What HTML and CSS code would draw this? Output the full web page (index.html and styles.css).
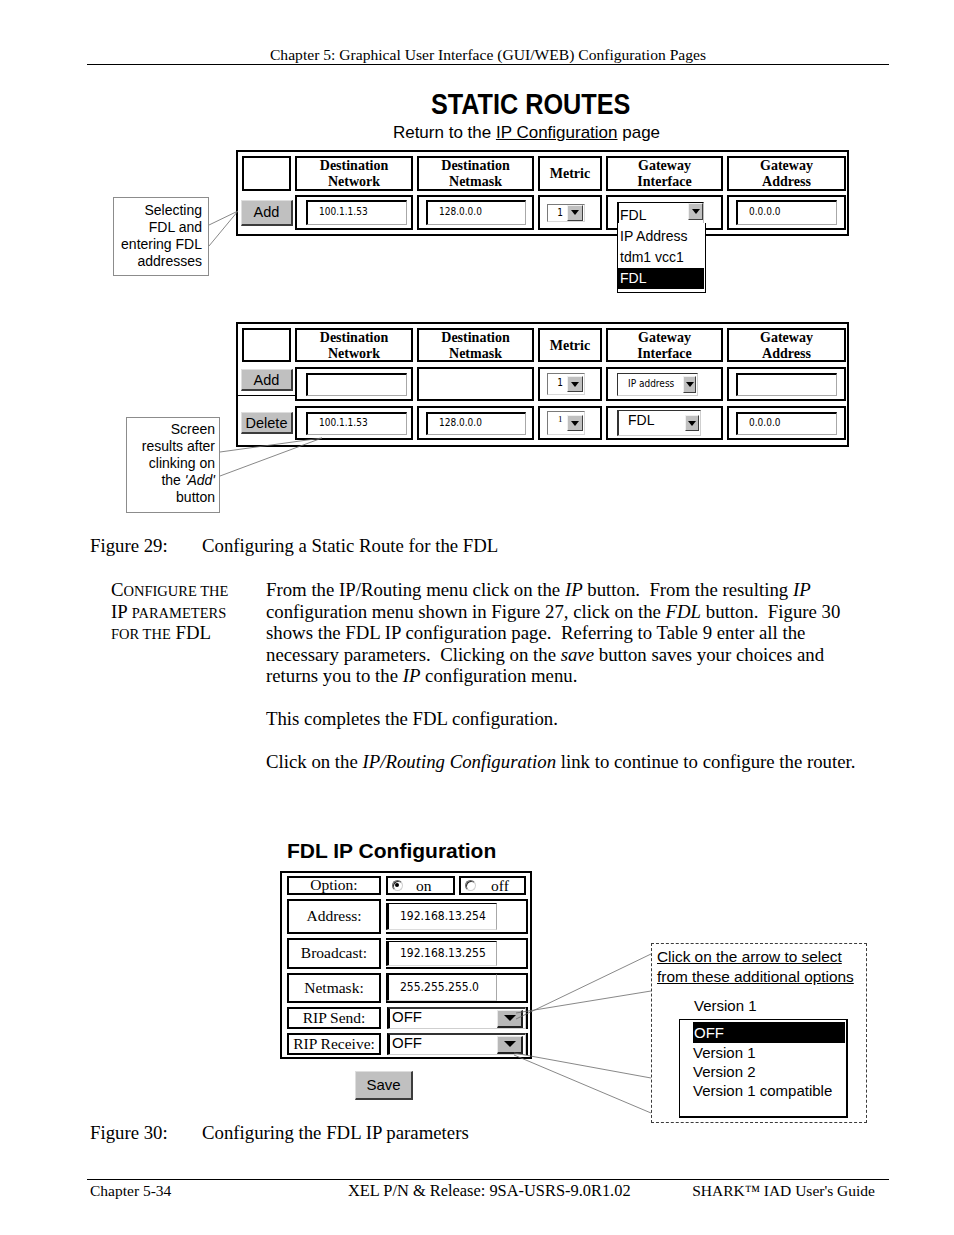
FILE: index.html
```html
<!DOCTYPE html>
<html lang="en">
<head>
<meta charset="utf-8">
<title>Static Routes / FDL IP Configuration</title>
<link rel="stylesheet" href="styles.css">
</head>
<body>
<div class="page">
  <header class="runhead">Chapter 5: Graphical User Interface (GUI/WEB) Configuration Pages</header>

  <section class="fig29">
    <h1 class="sr-title"><span>STATIC ROUTES</span></h1>
    <p class="sr-return">Return to the <span class="link">IP Configuration</span> page</p>

    <div class="rt rt1">
      <div class="c"></div>
      <div class="c h">Destination<br>Network</div>
      <div class="c h">Destination<br>Netmask</div>
      <div class="c h">Metric</div>
      <div class="c h">Gateway<br>Interface</div>
      <div class="c h">Gateway<br>Address</div>

      <div class="bc bc1"><span class="btn btn-add1">Add</span></div>
      <div class="c net"><span class="inp">100.1.1.53</span></div>
      <div class="c mask"><span class="inp">128.0.0.0</span></div>
      <div class="c met"><span class="sel sel-met"><span class="v">1</span><span class="arr"></span></span></div>
      <div class="c gi">
        <span class="sel sel-gi1"><span class="v">FDL</span><span class="arr"></span>
          <span class="ddlist">
            <span class="ddi">IP Address</span>
            <span class="ddi">tdm1 vcc1</span>
            <span class="ddi on">FDL</span>
          </span>
        </span>
      </div>
      <div class="c ga"><span class="inp">0.0.0.0</span></div>
    </div>

    <div class="rt rt2">
      <div class="c"></div>
      <div class="c h">Destination<br>Network</div>
      <div class="c h">Destination<br>Netmask</div>
      <div class="c h">Metric</div>
      <div class="c h">Gateway<br>Interface</div>
      <div class="c h">Gateway<br>Address</div>

      <div class="bc bc2"><span class="btn btn-sm">Add</span><span class="hline"></span></div>
      <div class="c net"><span class="inp inp-sm"></span></div>
      <div class="c mask"></div>
      <div class="c met"><span class="sel sel-met2"><span class="v">1</span><span class="arr"></span></span></div>
      <div class="c gi"><span class="sel sel-gi2"><span class="v">IP address</span><span class="arr"></span></span></div>
      <div class="c ga"><span class="inp inp-sm"></span></div>

      <div class="bc bc3"><span class="btn btn-sm">Delete</span></div>
      <div class="c net"><span class="inp inp-sm">100.1.1.53</span></div>
      <div class="c mask"><span class="inp inp-sm">128.0.0.0</span></div>
      <div class="c met"><span class="sel sel-met3"><span class="v">1</span><span class="arr"></span></span></div>
      <div class="c gi"><span class="sel sel-gi3"><span class="v">FDL</span><span class="arr"></span></span></div>
      <div class="c ga"><span class="inp inp-sm">0.0.0.0</span></div>
    </div>
  </section>

  <p class="caption caption29"><span class="fignum">Figure 29:</span><span>Configuring a Static Route for the FDL</span></p>

  <div class="topic">
    <div class="side">C<span class="sc">ONFIGURE THE</span><br>IP <span class="sc">PARAMETERS</span><br><span class="sc">FOR THE</span> FDL</div>
    <div class="body">
      <p>From the IP/Routing menu click on the <i>IP</i> button.&nbsp; From the resulting <i>IP</i><br>configuration menu shown in Figure 27<i>,</i> click on the <i>FDL</i> button.&nbsp; Figure 30<br>shows the FDL IP configuration page.&nbsp; Referring to Table 9 enter all the<br>necessary parameters.&nbsp; Clicking on the <i>save</i> button saves your choices and<br>returns you to the <i>IP</i> configuration menu.</p>
      <p>This completes the FDL configuration.</p>
      <p>Click on the <i>IP/Routing Configuration</i> link to continue to configure the router.</p>
    </div>
  </div>

  <section class="fig30">
    <h2 class="fdl-title">FDL IP Configuration</h2>
    <div class="fdl">
      <div class="lc">Option:</div>
      <div class="opts">
        <div class="opt"><span class="radio checked"></span><span class="ot">on</span></div>
        <div class="opt opt-off"><span class="radio"></span><span class="ot">off</span></div>
      </div>
      <div class="lc">Address:</div>
      <div class="vc"><span class="finp">192.168.13.254</span></div>
      <div class="lc">Broadcast:</div>
      <div class="vc"><span class="finp finp-b">192.168.13.255</span></div>
      <div class="lc">Netmask:</div>
      <div class="vc"><span class="finp">255.255.255.0</span></div>
      <div class="lc">RIP Send:</div>
      <div class="rc"><span class="rsel"><span class="v">OFF</span><span class="rarr"></span></span></div>
      <div class="lc">RIP Receive:</div>
      <div class="rc"><span class="rsel"><span class="v">OFF</span><span class="rarr"></span></span></div>
    </div>
    <div class="save-row"><span class="btn btn-save">Save</span></div>
  </section>

  <p class="caption caption30"><span class="fignum">Figure 30:</span><span>Configuring the FDL IP parameters</span></p>

  <footer class="runfoot">
    <span class="f1">Chapter 5-34</span>
    <span class="f2">XEL P/N &amp; Release: 9SA-USRS-9.0R1.02</span>
    <span class="f3">SHARK™ IAD User's Guide</span>
  </footer>

  <!-- annotations over the figures -->
  <div class="callout co1">Selecting<br>FDL and<br>entering FDL<br>addresses</div>
  <div class="callout co2">Screen<br>results after<br>clinking on<br>the <i>'Add'</i><br>button</div>
  <div class="callout co3">
    <div class="co3-head">Click on the arrow to select<br>from these additional options</div>
    <div class="co3-cur">Version 1</div>
    <div class="co3-list">
      <div class="co3-i on">OFF</div>
      <div class="co3-i">Version 1</div>
      <div class="co3-i">Version 2</div>
      <div class="co3-i">Version 1 compatible</div>
    </div>
  </div>

  <svg class="leaders" width="954" height="1235" viewBox="0 0 954 1235">
    <g stroke="#6a6a6a" stroke-width="0.8" fill="none">
      <line x1="209" y1="225" x2="238" y2="211"/>
      <line x1="209" y1="246" x2="238" y2="211"/>
      <line x1="220" y1="452" x2="322" y2="438"/>
      <line x1="220" y1="476" x2="322" y2="438"/>
      <line x1="516" y1="1019" x2="651" y2="954"/>
      <line x1="516" y1="1013" x2="651" y2="991"/>
      <line x1="514" y1="1053" x2="651" y2="1078"/>
      <line x1="514" y1="1055" x2="651" y2="1113"/>
    </g>
  </svg>
</div>
</body>
</html>
```

FILE: styles.css
```css
html, body {
  margin: 0;
  padding: 0;
  background: #fff;
}

.page {
  position: relative;
  width: 954px;
  height: 1235px;
  overflow: hidden;
  font-family: "Liberation Serif", "Times New Roman", serif;
  color: #000;
}

/* running head / foot */
.runhead {
  margin-left: 87px;
  width: 802px;
  padding-top: 45px;
  font-size: 15.6px;
  line-height: 19px;
  text-align: center;
  border-bottom: 1px solid #000;
}

.runfoot {
  margin-left: 87px;
  width: 802px;
  margin-top: 36px;
  border-top: 1px solid #000;
  box-sizing: border-box;
  padding: 2px 14px 0 3px;
  display: flex;
  font-size: 15.5px;
  line-height: 18px;
}
.runfoot .f1 { width: 258px; }
.runfoot .f2 { font-size: 16.4px; }
.runfoot .f3 { margin-left: auto; }

/* figure 29 */
.sr-title {
  margin: 24px 0 0;
  font-family: "Liberation Sans", Arial, sans-serif;
  font-weight: bold;
  font-size: 29px;
  line-height: 30px;
  text-align: center;
  padding-left: 108px;
}
.sr-title span {
  display: inline-block;
  transform: scaleX(0.87);
}
.sr-return {
  margin: 5px 0 0;
  padding-left: 99px;
  text-align: center;
  font-family: "Liberation Sans", Arial, sans-serif;
  font-size: 17px;
  line-height: 18px;
}
.link { text-decoration: underline; }

.rt {
  margin-left: 236px;
  width: 613px;
  box-sizing: border-box;
  border: 2px solid #000;
  display: grid;
  grid-template-columns: 49px 118px 117px 64px 117px 119px;
  column-gap: 4px;
}
.rt1 {
  margin-top: 8px;
  padding: 4px 1px 4px 4px;
  grid-auto-rows: 35px;
  row-gap: 4px;
}
.rt2 {
  margin-top: 86px;
  padding: 4px 1px 5px 4px;
  grid-auto-rows: 34px;
  row-gap: 5px;
}

.c {
  box-sizing: border-box;
  border: 2px solid #000;
  display: flex;
  align-items: center;
  min-width: 0;
}
.h {
  justify-content: center;
  text-align: center;
  font-weight: bold;
  font-size: 14px;
  line-height: 16px;
  padding-top: 1px;
}

.net { padding-left: 9px; }
.net .inp { width: 101px; }
.mask { padding-left: 7px; }
.mask .inp { width: 100px; }
.ga { padding-left: 7px; }
.ga .inp { width: 101px; }
.met { padding-left: 7px; }
.gi { padding-left: 9px; }

.inp {
  display: block;
  box-sizing: border-box;
  height: 25px;
  background: #fff;
  border-top: 2px solid #000;
  border-left: 2px solid #000;
  border-right: 1px solid #a8a8a8;
  border-bottom: 1px solid #a8a8a8;
  padding: 2px 0 0 11px;
  font-family: "DejaVu Sans Condensed", "DejaVu Sans", sans-serif;
  font-stretch: condensed;
  font-size: 10px;
  line-height: 16px;
  white-space: nowrap;
}
.inp-sm { height: 23px; padding-top: 1px; }

/* buttons */
.bc {
  display: flex;
  flex-direction: column;
  align-items: flex-start;
  min-width: 0;
}
.bc1 { justify-content: center; }
.bc2 { padding-top: 2px; }
.bc3 { justify-content: center; }
.btn {
  display: flex;
  align-items: center;
  justify-content: center;
  box-sizing: border-box;
  background: #c0c0c0;
  border-top: 1px solid #dedede;
  border-left: 1px solid #dedede;
  border-right: 2px solid #3c3c3c;
  border-bottom: 2px solid #3c3c3c;
  font-family: "Liberation Sans", Arial, sans-serif;
  font-size: 14.5px;
  color: #000;
}
.btn-add1 { width: 52px; height: 26px; margin-left: -1px; }
.btn-sm { width: 52px; height: 22px; margin-left: -1px; }
.hline {
  display: block;
  margin-top: 4px;
  margin-left: -4px;
  width: 57px;
  height: 1px;
  background: #000;
}

/* select widgets */
.sel {
  display: flex;
  box-sizing: border-box;
  background: #fff;
  position: relative;
}
.sel .v {
  flex: 1;
  min-width: 0;
  white-space: nowrap;
}
.arr {
  box-sizing: border-box;
  background: #c0c0c0;
  border-top: 1px solid #f0f0f0;
  border-left: 1px solid #f0f0f0;
  border-right: 1px solid #404040;
  border-bottom: 1px solid #404040;
  display: flex;
  align-items: center;
  justify-content: center;
}
.arr::before {
  content: "";
  width: 0;
  height: 0;
  border-left: 4px solid transparent;
  border-right: 4px solid transparent;
  border-top: 5px solid #000;
}

.sel-met, .sel-met2, .sel-met3 {
  width: 38px;
  border: 1px solid;
  border-color: #7a7a7a #d8d8d8 #d8d8d8 #7a7a7a;
  font-family: "DejaVu Sans Condensed", "DejaVu Sans", sans-serif;
  font-stretch: condensed;
  font-size: 10px;
}
.sel-met { height: 18px; line-height: 15px; }
.sel-met2 { height: 22px; line-height: 18px; }
.sel-met3 { height: 24px; line-height: 14px; }
.sel-met .v, .sel-met2 .v { text-align: right; padding-right: 4px; }
.sel-met3 .v {
  padding-left: 10px;
  font-family: "Liberation Serif", serif;
  font-size: 9px;
}
.sel-met .arr { width: 16px; margin: 0 1px 0 0; }
.sel-met2 .arr { width: 16px; margin: 2px 1px 2px 0; }
.sel-met3 .arr { width: 16px; margin: 3px 1px 3px 0; }

.sel-gi1 {
  width: 87px;
  height: 21px;
  border-top: 1px solid #000;
  border-left: 2px solid #000;
  border-right: 1px solid #bdbdbd;
  font-family: "Liberation Sans", Arial, sans-serif;
  font-size: 14px;
}
.sel-gi1 .v {
  align-self: flex-end;
  line-height: 16px;
  padding-left: 1px;
}
.sel-gi1 .arr { width: 15px; height: 17px; margin-top: 0; }

.ddlist {
  position: absolute;
  left: -2px;
  top: 100%;
  width: 89px;
  box-sizing: border-box;
  background: #fff;
  border: 1px solid #000;
  border-top: 0;
  padding: 3px 1px 3px 0;
  z-index: 2;
  font-family: "Liberation Sans", Arial, sans-serif;
  font-size: 14px;
}
.ddi {
  display: block;
  height: 21px;
  line-height: 21px;
  padding-left: 2px;
}
.ddi.on { background: #000; color: #fff; }

.sel-gi2 {
  width: 81px;
  height: 23px;
  border-top: 1px solid #333;
  border-left: 1px solid #333;
  border-right: 1px solid #cfcfcf;
  border-bottom: 1px solid #cfcfcf;
  font-family: "DejaVu Sans Condensed", "DejaVu Sans", sans-serif;
  font-stretch: condensed;
  font-size: 10px;
  line-height: 20px;
}
.sel-gi2 .v { padding-left: 10px; }
.sel-gi2 .arr { width: 13px; margin: 2px 1px 2px 0; }

.sel-gi3 {
  width: 84px;
  height: 26px;
  border-top: 1px solid #333;
  border-left: 2px solid #333;
  border-right: 1px solid #cfcfcf;
  border-bottom: 1px solid #cfcfcf;
  font-family: "Liberation Sans", Arial, sans-serif;
  font-size: 14px;
  line-height: 18px;
}
.sel-gi3 .v { padding-left: 9px; }
.sel-gi3 .arr { width: 14px; margin: 4px 1px 4px 0; }

/* captions */
.caption {
  margin: 0;
  padding-left: 90px;
  display: flex;
  font-size: 18.8px;
  line-height: 20px;
  white-space: nowrap;
}
.caption .fignum { width: 112px; }
.caption29 { margin-top: 89px; }
.caption30 { margin-top: 23px; }

/* body topic */
.topic {
  margin-top: 23px;
  display: flex;
  font-size: 18.8px;
  line-height: 21.5px;
}
.side {
  width: 155px;
  padding-left: 111px;
  white-space: nowrap;
}
.sc {
  font-size: 14.5px;
  line-height: 12px;
}
.body p {
  margin: 0 0 21.5px;
  white-space: nowrap;
}
.body p:last-child { margin-bottom: 0; }

/* figure 30 */
.fdl-title {
  margin: 65px 0 0 287px;
  font-family: "Liberation Sans", Arial, sans-serif;
  font-weight: bold;
  font-size: 21px;
  line-height: 26px;
}
.fdl {
  margin: 7px 0 0 280px;
  width: 252px;
  box-sizing: border-box;
  border: 2px solid #000;
  padding: 3px 2px 2px 5px;
  display: grid;
  grid-template-columns: 94px 142px;
  grid-template-rows: 19px 35px 31px 30px 22px 22px;
  column-gap: 5px;
  row-gap: 4px;
  font-size: 15.5px;
}
.lc {
  box-sizing: border-box;
  border: 2px solid #000;
  display: flex;
  align-items: center;
  justify-content: center;
  line-height: 16px;
  white-space: nowrap;
}
.opts {
  display: flex;
  gap: 4px;
  width: 140px;
}
.opt {
  box-sizing: border-box;
  border: 2px solid #000;
  width: 69px;
  display: flex;
  align-items: center;
  padding-left: 4px;
}
.opt-off { width: 67px; }
.opt .ot { margin-left: 13px; line-height: 15px; }
.opt-off .ot { margin-left: 15px; }
.radio {
  box-sizing: border-box;
  width: 11px;
  height: 11px;
  border-radius: 50%;
  border: 1px solid;
  border-color: #6a6a6a #d0d0d0 #d0d0d0 #6a6a6a;
  background: #fff;
  box-shadow: inset 1px 1px 0 #303030;
  position: relative;
}
.radio.checked::after {
  content: "";
  position: absolute;
  left: 2px;
  top: 2px;
  width: 4px;
  height: 4px;
  border-radius: 50%;
  background: #000;
}

.vc {
  box-sizing: border-box;
  border: 2px solid #000;
  border-left: 0;
  display: flex;
  align-items: center;
}
.finp {
  display: block;
  box-sizing: border-box;
  width: 111px;
  height: 27px;
  background: #fff;
  border-left: 3px solid #000;
  border-top: 1px solid #000;
  border-right: 1px solid #a8a8a8;
  border-bottom: 1px solid #dcdcdc;
  padding-left: 11px;
  font-family: "DejaVu Sans Condensed", "DejaVu Sans", sans-serif;
  font-stretch: condensed;
  font-size: 12px;
  line-height: 25px;
  white-space: nowrap;
}
.finp-b { height: 25px; line-height: 23px; }

.rc {
  box-sizing: border-box;
  border-right: 2px solid #000;
  display: flex;
}
.rsel {
  display: flex;
  flex: 1;
  box-sizing: border-box;
  margin-left: 1px;
  background: #fff;
  border-left: 3px solid #000;
  border-top: 2px solid #333;
  border-bottom: 1px solid #cfcfcf;
  border-right: 1px solid #cfcfcf;
  font-family: "Liberation Sans", Arial, sans-serif;
  font-size: 15px;
  line-height: 16px;
}
.rsel .v { flex: 1; padding-left: 2px; }
.rarr {
  box-sizing: border-box;
  width: 26px;
  height: 18px;
  margin: 1px 2px 0 0;
  background: #b8b8b8;
  border-top: 1px solid #e8e8e8;
  border-left: 1px solid #e8e8e8;
  border-right: 2px solid #222;
  border-bottom: 2px solid #222;
  display: flex;
  align-items: center;
  justify-content: center;
}
.rarr::before {
  content: "";
  width: 0;
  height: 0;
  border-left: 6px solid transparent;
  border-right: 6px solid transparent;
  border-top: 6px solid #000;
}

.save-row {
  margin: 12px 0 0 355px;
  display: flex;
}
.btn-save {
  width: 58px;
  height: 29px;
  font-size: 15px;
}

/* callouts (annotations over the figures) */
.callout {
  position: absolute;
  box-sizing: border-box;
  background: #fff;
  font-family: "Liberation Sans", Arial, sans-serif;
  white-space: nowrap;
}
.co1 {
  left: 113px;
  top: 197px;
  width: 96px;
  height: 79px;
  border: 1px solid #8c8c8c;
  text-align: right;
  padding: 4px 6px 0 0;
  font-size: 14px;
  line-height: 17px;
}
.co2 {
  left: 126px;
  top: 417px;
  width: 94px;
  height: 96px;
  border: 1px solid #8c8c8c;
  text-align: right;
  padding: 3px 4px 0 0;
  font-size: 14px;
  line-height: 17px;
}
.co3 {
  left: 651px;
  top: 943px;
  width: 216px;
  height: 180px;
  border: 1px dashed #3c3c3c;
  padding: 3px 0 0 5px;
  font-size: 15px;
  line-height: 20px;
}
.co3-head { text-decoration: underline; font-size: 15.4px; }
.co3-cur { margin: 9px 0 0 37px; }
.co3-list {
  margin: 3px 0 0 22px;
  width: 169px;
  height: 99px;
  box-sizing: border-box;
  border: 1px solid #000;
  border-right-width: 2px;
  border-bottom-width: 2px;
  padding: 2px 0 0 13px;
}
.co3-i { line-height: 19px; }
.co3-i.on {
  width: 152px;
  height: 21px;
  line-height: 21px;
  background: #000;
  color: #fff;
  padding-left: 1px;
  box-sizing: border-box;
}

.leaders {
  position: absolute;
  left: 0;
  top: 0;
  pointer-events: none;
}
```
